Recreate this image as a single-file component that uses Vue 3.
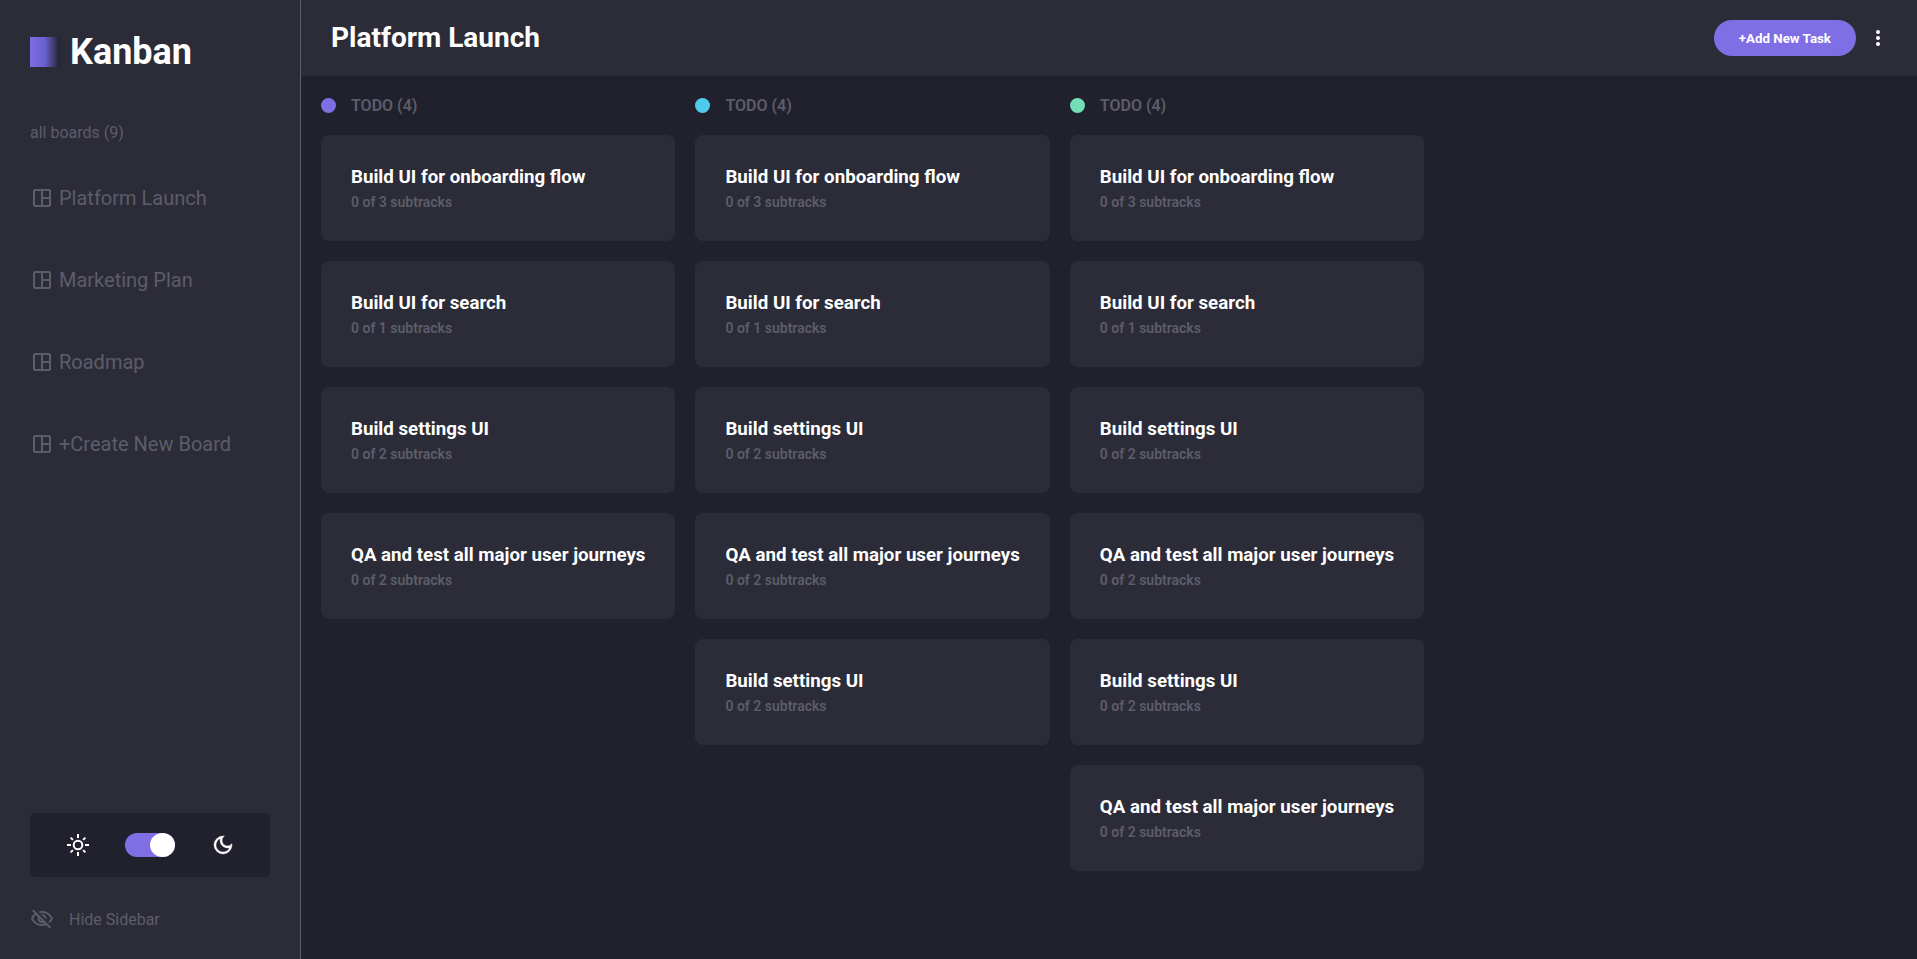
<script setup>
import { ref } from 'vue'

const boards = ['Platform Launch', 'Marketing Plan', 'Roadmap', '+Create New Board']
const darkMode = ref(true)

const onboarding = { title: 'Build UI for onboarding flow', total: 3 }
const search = { title: 'Build UI for search', total: 1 }
const settings = { title: 'Build settings UI', total: 2 }
const journeys = { title: 'QA and test all major user journeys', total: 2 }

const columns = [
  { tone: 'violet', tasks: [onboarding, search, settings, journeys] },
  { tone: 'sky', tasks: [onboarding, search, settings, journeys, settings] },
  { tone: 'mint', tasks: [onboarding, search, settings, journeys, settings, journeys] },
]
</script>

<template>
  <div class="app">
    <aside class="sidebar">
      <div class="brand">
        <span class="brand-mark"></span>
        <span class="brand-name">Kanban</span>
      </div>
      <p class="count">all boards (9)</p>
      <nav class="boards">
        <a v-for="board in boards" :key="board" class="board-link" href="#">
          <svg class="icon" viewBox="0 0 24 24" aria-hidden="true">
            <path fill-rule="evenodd" d="M19 3H5a2 2 0 0 0-2 2v14a2 2 0 0 0 2 2h14a2 2 0 0 0 2-2V5a2 2 0 0 0-2-2zM19 5v6h-6V5zM5 5h6v14H5zM13 19v-6h6v6z" />
          </svg>
          <span>{{ board }}</span>
        </a>
      </nav>
      <div class="theme">
        <svg class="icon" viewBox="0 0 24 24" aria-hidden="true">
          <g fill="none" stroke="currentColor" stroke-width="2">
            <circle cx="12" cy="12" r="4.300" />
            <path d="M12 1v4M12 19v4M1 12h4M19 12h4M4.600 4.600l2.300 2.300M17.100 17.100l2.300 2.300M4.600 19.400l2.300-2.300M17.100 6.900l2.300-2.300" />
          </g>
        </svg>
        <input v-model="darkMode" class="switch" type="checkbox" role="switch" aria-label="Dark mode" />
        <svg class="icon" viewBox="0 0 24 24" aria-hidden="true">
          <path stroke="currentColor" stroke-width=".4" d="M9.370 5.510A7.350 7.350 0 0 0 9.100 7.500c0 4.080 3.320 7.400 7.400 7.400.68 0 1.350-.09 1.990-.27A7.014 7.014 0 0 1 12 19c-3.860 0-7-3.140-7-7 0-2.930 1.810-5.450 4.370-6.490zM12 3a9 9 0 1 0 9 9c0-.46-.04-.92-.1-1.360a5.389 5.389 0 0 1-4.400 2.260 5.403 5.403 0 0 1-3.140-9.800c-.44-.06-.9-.1-1.360-.1z" />
        </svg>
      </div>
      <button class="hide" type="button">
        <svg class="icon" viewBox="0 0 24 24" aria-hidden="true">
          <path d="M12 6a9.770 9.770 0 0 1 8.820 5.500 9.647 9.647 0 0 1-2.410 3.120l1.410 1.410c1.390-1.230 2.490-2.770 3.180-4.530C21.270 7.110 17 4 12 4c-1.270 0-2.490.2-3.640.57l1.650 1.650C10.660 6.090 11.320 6 12 6zm-1.070 1.140L13 9.210c.57.25 1.030.71 1.280 1.280l2.070 2.070c.08-.34.14-.7.14-1.070C16.500 9.010 14.480 7 12 7c-.37 0-.72.05-1.070.14zM2.010 3.870l2.680 2.680A11.738 11.738 0 0 0 1 11.500C2.730 15.890 7 19 12 19c1.520 0 2.980-.29 4.320-.82l3.420 3.420 1.410-1.410L3.420 2.450 2.010 3.870zm7.500 7.500 2.610 2.610c-.04.01-.08.02-.12.02a2.500 2.500 0 0 1-2.500-2.500c0-.05.01-.08.01-.13zm-3.400-3.400 1.750 1.750a4.600 4.600 0 0 0-.36 1.780 4.507 4.507 0 0 0 6.270 4.140l.98.98c-.88.24-1.800.38-2.750.38a9.770 9.770 0 0 1-8.820-5.500c.7-1.430 1.720-2.610 2.930-3.530z" />
        </svg>
        <span>Hide Sidebar</span>
      </button>
    </aside>

    <div class="workspace">
      <header class="topbar">
        <h1 class="title">Platform Launch</h1>
        <div class="actions">
          <button class="add" type="button">+Add New Task</button>
          <button class="more" type="button" aria-label="Board options">
            <svg class="icon" viewBox="0 0 24 24" aria-hidden="true">
              <circle cx="12" cy="6" r="2" />
              <circle cx="12" cy="12" r="2" />
              <circle cx="12" cy="18" r="2" />
            </svg>
          </button>
        </div>
      </header>
      <main class="columns">
        <section v-for="column in columns" :key="column.tone" class="column">
          <h2 class="column-head">
            <span class="dot" :class="column.tone"></span>
            <span>TODO (4)</span>
          </h2>
          <article v-for="(task, index) in column.tasks" :key="index" class="card">
            <h3 class="task">{{ task.title }}</h3>
            <p class="subtasks">0 of {{ task.total }} subtracks</p>
          </article>
        </section>
      </main>
    </div>
  </div>
</template>

<style>
body {
  background: #21212d;
}
</style>

<style scoped>
.app {
  display: flex;
  min-height: 100vh;
  background: #21212d;
  color: #5c5d69;
  font-family: Roboto, "Liberation Sans", sans-serif;
  font-size: 16px;
}

.app *,
.app *::before {
  box-sizing: border-box;
}

button {
  border: 0;
  padding: 0;
  background: none;
  color: inherit;
  font-family: inherit;
  cursor: pointer;
}

h1,
h2,
h3,
p {
  margin: 0;
}

.icon {
  display: block;
  flex: none;
  width: 24px;
  height: 24px;
  fill: currentColor;
}

.sidebar {
  display: flex;
  flex: none;
  flex-direction: column;
  width: 301px;
  padding: 30px 30px 28px;
  border-right: 1px solid #5c5d69;
  background: #2c2c38;
}

.brand {
  display: flex;
  align-items: center;
  gap: 10px;
}

.brand-mark {
  width: 30px;
  height: 30px;
  background: linear-gradient(90deg, #806ee5 0%, #6860cc 50%, #21212d 100%);
}

.brand-name {
  color: #fff;
  font-size: 36px;
  font-weight: 700;
  line-height: 44px;
}

.count {
  margin-top: 48px;
  line-height: 22px;
}

.boards {
  display: flex;
  flex-direction: column;
  margin-top: 13px;
}

.board-link {
  display: flex;
  align-items: center;
  gap: 5px;
  height: 82px;
  color: inherit;
  font-size: 20px;
  text-decoration: none;
}

.theme {
  display: flex;
  align-items: center;
  justify-content: space-evenly;
  height: 64px;
  margin-top: auto;
  border-radius: 5px;
  background: #21212d;
  color: #fff;
}

.switch {
  appearance: none;
  display: flex;
  width: 50px;
  height: 24px;
  margin: 0;
  border-radius: 12px;
  background: #806ee5;
  cursor: pointer;
}

.switch::before {
  content: "";
  width: 25px;
  height: 24px;
  border-radius: 50%;
  background: #fff;
}

.switch:checked {
  justify-content: flex-end;
}

.hide {
  display: flex;
  align-items: center;
  gap: 15px;
  margin-top: 30px;
  font-size: 16px;
}

.workspace {
  flex: 1;
  min-width: 0;
}

.topbar {
  display: flex;
  align-items: center;
  justify-content: space-between;
  padding: 19px 27px 19px 30px;
  background: #2c2c38;
}

.title {
  color: #fff;
  font-size: 28px;
  line-height: 38px;
}

.actions {
  display: flex;
  align-items: center;
  gap: 10px;
  color: #fff;
}

.add {
  height: 36px;
  padding: 0 25px;
  border-radius: 18px;
  background: #806ee5;
  font-weight: 700;
}

.columns {
  display: flex;
  gap: 20px;
  padding: 20px;
}

.column {
  display: flex;
  flex-direction: column;
  gap: 20px;
}

.column-head {
  display: flex;
  align-items: center;
  gap: 15px;
  font-size: 16px;
  font-weight: 600;
  line-height: 19px;
}

.dot {
  width: 15px;
  height: 15px;
  border-radius: 50%;
}

.violet {
  background: #806ee5;
}

.sky {
  background: #50cbe9;
}

.mint {
  background: #74deb8;
}

.card {
  padding: 30px;
  border-radius: 8px;
  background: #2c2c38;
}

.task {
  color: #fff;
  line-height: 24px;
}

.subtasks {
  margin-top: 4px;
  font-size: 14px;
  font-weight: 600;
  line-height: 18px;
}
</style>
